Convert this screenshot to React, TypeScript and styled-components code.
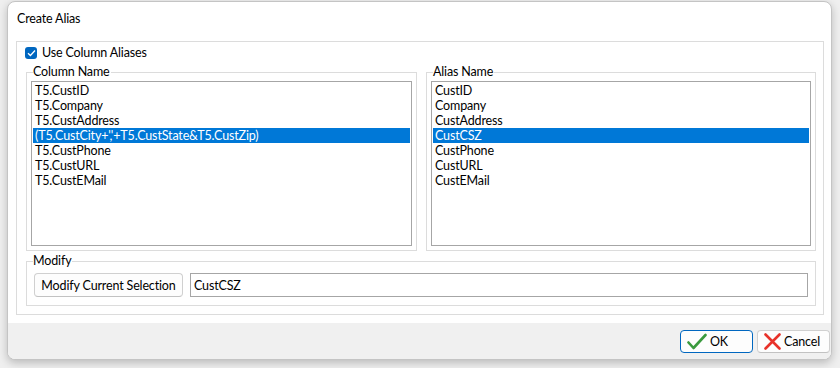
import React from "react";
import styled, { createGlobalStyle } from "styled-components";

const Global = createGlobalStyle`
  html, body { margin: 0; padding: 0; }
  body {
    background: #efefef;
    font-family: Lato, "Noto Sans", sans-serif;
    font-size: 12.5px;
    letter-spacing: -0.15px;
    color: #000;
    width: 840px;
    height: 368px;
    overflow: hidden;
  }
  #root { padding: 1px 0 0 7px; }
`;

const Window = styled.div`
  width: 825px;
  height: 359px;
  box-sizing: border-box;
  background: #fff;
  border: 1px solid #c4c4c4;
  border-radius: 8px;
  box-shadow: 0 3px 8px rgba(0, 0, 0, 0.22);
  display: flex;
  flex-direction: column;
  overflow: hidden;
`;

const TitleBar = styled.div`
  height: 31px;
  flex: none;
  display: flex;
  align-items: center;
  padding-left: 9px;
  padding-top: 1px;
  box-sizing: border-box;
  line-height: 15px;
`;

const Body = styled.div`
  padding: 8px 7px 8px 8px;
  flex: none;
`;

const OuterGroup = styled.div`
  border: 1px solid #dcdcdc;
  padding: 4px 7px 8px 9px;
  display: flex;
  flex-direction: column;
`;

const CheckRow = styled.label`
  display: flex;
  align-items: center;
  gap: 5px;
  height: 13px;
  line-height: 15px;
  margin: 0 0 6px -1px;
`;

const CheckBox = styled.span`
  width: 12px;
  height: 12px;
  border-radius: 3px;
  background: #0067c0;
  display: flex;
  align-items: center;
  justify-content: center;
  flex: none;
`;

const Columns = styled.div`
  display: grid;
  grid-template-columns: 391px 390px;
  column-gap: 9px;
`;

const Group = styled.fieldset<{ $pt?: number; $pb?: number; $pl?: number }>`
  margin: 0;
  min-width: 0;
  border: 1px solid #dcdcdc;
  padding: ${(p) => p.$pt ?? 2}px ${(p) => p.$pl ?? 4}px ${(p) => p.$pb ?? 4}px ${(p) => p.$pl ?? 4}px;
`;

const Caption = styled.legend<{ $ml?: number }>`
  padding: 0 1px 0 0;
  margin-left: ${(p) => p.$ml ?? 2}px;
  line-height: 14px;
  color: #000;
`;

const ListBox = styled.div`
  height: 165px;
  box-sizing: border-box;
  border: 1px solid #a6a6a6;
  padding: 1px;
  background: #fff;
`;

const Item = styled.div<{ $sel?: boolean }>`
  height: 15px;
  line-height: 15px;
  padding-left: 2px;
  white-space: nowrap;
  background: ${(p) => (p.$sel ? "#0078d7" : "transparent")};
  color: ${(p) => (p.$sel ? "#fff" : "#000")};
`;

const ModifyGroup = styled(Group)`
  margin-top: 3px;
`;

const ModifyRow = styled.div`
  display: flex;
  gap: 7px;
  align-items: center;
`;

const Button = styled.button<{ $w: number; $h: number; $focus?: boolean; $icon?: boolean }>`
  width: ${(p) => p.$w}px;
  height: ${(p) => p.$h}px;
  box-sizing: border-box;
  background: #fdfdfd;
  border: 1px solid ${(p) => (p.$focus ? "#0067c0" : "#d0d0d0")};
  border-bottom-color: ${(p) => (p.$focus ? "#0067c0" : "#c2c2c2")};
  border-radius: 4px;
  font-family: inherit;
  font-size: inherit;
  letter-spacing: inherit;
  color: #000;
  padding: 0 0 0 ${(p) => (p.$icon ? 6 : 0)}px;
  display: flex;
  align-items: center;
  justify-content: ${(p) => (p.$icon ? "flex-start" : "center")};
  flex: none;
  gap: 3px;
`;

const TextInput = styled.div`
  flex: 1;
  height: 24px;
  box-sizing: border-box;
  border: 1px solid #a6a6a6;
  padding-left: 3px;
  display: flex;
  align-items: center;
  line-height: 15px;
`;

const Footer = styled.div`
  flex: 1;
  background: #f0f0f0;
  display: flex;
  justify-content: flex-end;
  align-items: flex-start;
  gap: 4px;
  padding: 7px 1px 0 0;
`;

const Check = () => (
  <svg width="20" height="17" viewBox="0 0 20 17">
    <path d="M1.5 9.5 L6.5 15 L18.5 2" fill="none" stroke="#3a9a3e" strokeWidth="2.6" strokeLinecap="round" strokeLinejoin="round" />
  </svg>
);

const Cross = () => (
  <svg width="17" height="17" viewBox="0 0 17 17">
    <path d="M1.5 1.5 L15.5 15.5 M15.5 1.5 L1.5 15.5" fill="none" stroke="#e8322a" strokeWidth="2.6" strokeLinecap="round" />
  </svg>
);

const columns = [
  "T5.CustID",
  "T5.Company",
  "T5.CustAddress",
  "(T5.CustCity+','+T5.CustState&T5.CustZip)",
  "T5.CustPhone",
  "T5.CustURL",
  "T5.CustEMail",
];
const aliases = ["CustID", "Company", "CustAddress", "CustCSZ", "CustPhone", "CustURL", "CustEMail"];

export default function App() {
  return (
    <>
      <Global />
      <Window>
        <TitleBar>Create Alias</TitleBar>
        <Body>
          <OuterGroup>
            <CheckRow>
              <CheckBox>
                <svg width="9" height="8" viewBox="0 0 9 8">
                  <path d="M1 4.2 L3.4 6.5 L8 1.5" fill="none" stroke="#fff" strokeWidth="1.3" />
                </svg>
              </CheckBox>
              Use Column Aliases
            </CheckRow>
            <Columns>
              <Group>
                <Caption $ml={2}>Column Name</Caption>
                <ListBox>
                  {columns.map((c, i) => (
                    <Item key={c} $sel={i === 3}>{c}</Item>
                  ))}
                </ListBox>
              </Group>
              <Group>
                <Caption $ml={2}>Alias Name</Caption>
                <ListBox>
                  {aliases.map((c, i) => (
                    <Item key={c} $sel={i === 3}>{c}</Item>
                  ))}
                </ListBox>
              </Group>
            </Columns>
            <ModifyGroup $pt={5} $pb={8} $pl={7}>
              <Caption $ml={-1}>Modify</Caption>
              <ModifyRow>
                <Button $w={149} $h={24}>Modify Current Selection</Button>
                <TextInput>CustCSZ</TextInput>
              </ModifyRow>
            </ModifyGroup>
          </OuterGroup>
        </Body>
        <Footer>
          <Button $w={73} $h={23} $focus $icon>
            <Check />
            OK
          </Button>
          <Button $w={73} $h={23} $icon>
            <Cross />
            Cancel
          </Button>
        </Footer>
      </Window>
    </>
  );
}
